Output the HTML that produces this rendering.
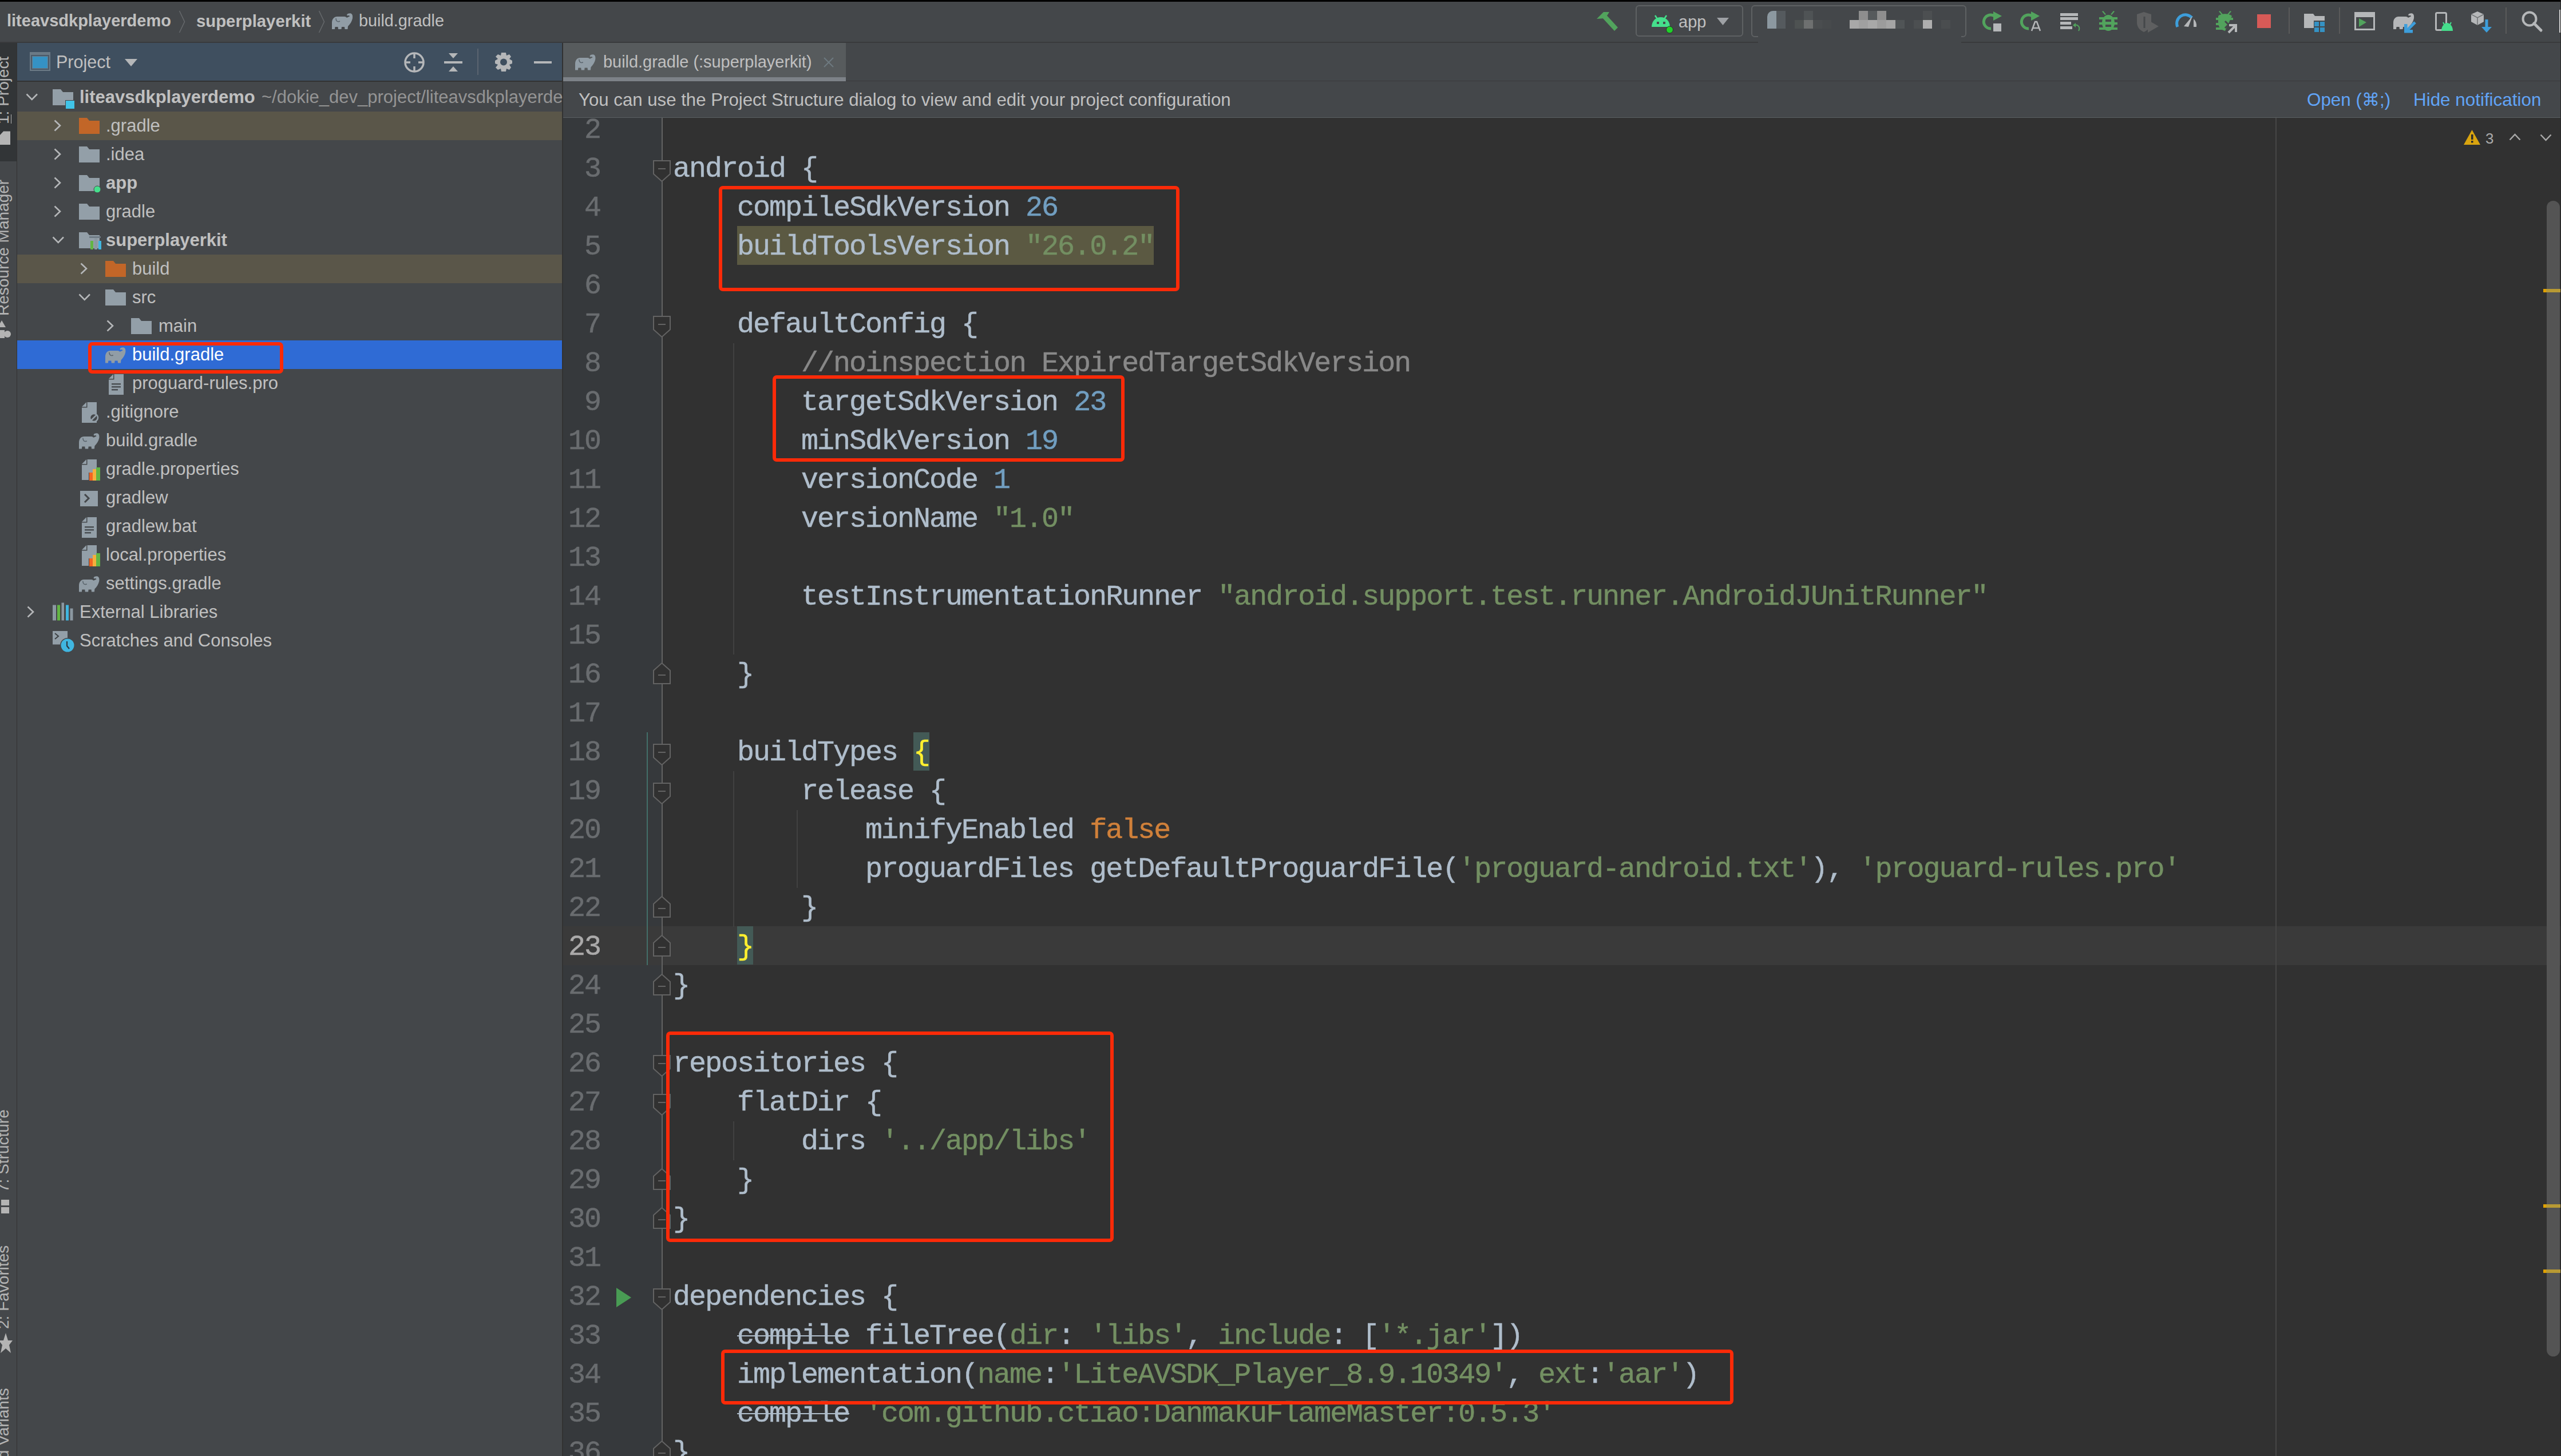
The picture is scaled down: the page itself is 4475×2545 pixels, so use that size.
<!DOCTYPE html>
<html><head><meta charset="utf-8"><title>build.gradle</title>
<style>
html,body{margin:0;padding:0;}
body{width:4475px;height:2545px;overflow:hidden;position:relative;background:#44474A;font-family:"Liberation Sans",sans-serif;}
div{position:absolute;box-sizing:border-box;}
.t{white-space:pre;line-height:1;}
.c{position:absolute;font-family:"Liberation Mono",monospace;white-space:pre;line-height:1;font-size:50px;letter-spacing:-2px;color:#AFBDCB;-webkit-text-stroke:0.5px currentColor;}
svg{position:absolute;overflow:visible;}
</style></head><body>

<div style="left:0px;top:0px;width:4475px;height:3px;background:#000000;"></div>
<div style="left:0px;top:3px;width:4475px;height:70px;background:#44474A;"></div>
<div style="left:0px;top:72.6px;width:4475px;height:2px;background:#393A3C;"></div>
<div class="t" style="left:12px;top:22.21px;font-size:29px;color:#C0C0C0;font-weight:bold;">liteavsdkplayerdemo</div>
<svg style="left:312px;top:18px;" width="12" height="40" viewBox="0 0 12 40"><path d="M1.5 1 L10.5 20 L1.5 39" fill="none" stroke="#65686B" stroke-width="1.6"/></svg>
<div class="t" style="left:343px;top:21.95px;font-size:29.3px;color:#C0C0C0;font-weight:bold;">superplayerkit</div>
<svg style="left:556px;top:18px;" width="12" height="40" viewBox="0 0 12 40"><path d="M1.5 1 L10.5 20 L1.5 39" fill="none" stroke="#65686B" stroke-width="1.6"/></svg>
<svg style="left:580px;top:23px;" width="37.0" height="28.0" viewBox="0 0 37.0 28.0"><g transform="scale(1.0)"><path d="M0 28 L0 17 C0 10 4 6 9 6 L22 6 C24 6 25 7 26 8 C28 7 30 6 31 5.5 C31 4 29 3.5 27 4.5 L26 3 C27 0.5 31 0 33 0.5 C36 1.5 36.5 5 36 9 C35 14 32 19 28 23 L27.5 28 L22.5 28 L22 24 L17 24 L16.5 28 L11 28 L10.5 24 L5.5 24 L5 28 Z" fill="#919DA6"/><path d="M7 9 C7 14 10 16 14 14" fill="none" stroke="#5A646C" stroke-width="1.6"/></g></svg>
<div class="t" style="left:627px;top:22.38px;font-size:28.8px;color:#C0C0C0;font-weight:normal;">build.gradle</div>
<svg style="left:2790px;top:19px;" width="38" height="36" viewBox="0 0 38 36"><g fill="#52A35D"><path d="M0 14 L12 2 L22 2 L19 7 L13 13 Z"/><path d="M8 10 L14 4 L37 29 L31 35 Z"/></g></svg>
<div style="left:2858px;top:9px;width:188px;height:55px;background:transparent;border:2px solid #5E6163;border-radius:6px;"></div>
<svg style="left:2886px;top:26px;" width="34" height="30" viewBox="0 0 34 30"><g fill="#45DF8C"><path d="M0 21 C0 11 7 4 16 4 C25 4 32 11 32 21 Z"/><path d="M6 1 L10 7" stroke="#45DF8C" stroke-width="2.5"/><path d="M26 1 L22 7" stroke="#45DF8C" stroke-width="2.5"/></g><rect x="9" y="12" width="4" height="4" fill="#45484A"/><rect x="20" y="12" width="4" height="4" fill="#45484A"/><circle cx="31.5" cy="26" r="6" fill="#1FD12A" stroke="#2B2B2B" stroke-width="1"/></svg>
<div class="t" style="left:2933px;top:23.71px;font-size:29px;color:#C0C0C0;font-weight:normal;">app</div>
<svg style="left:3000px;top:31px;" width="22" height="14" viewBox="0 0 22 14"><path d="M0 0 L21 0 L10.5 13 Z" fill="#9EA1A5"/></svg>
<div style="left:3060px;top:9px;width:376px;height:56px;background:transparent;border:2px solid #5E6163;border-radius:6px;"></div>
<div style="left:3072px;top:50px;width:355px;height:25px;background:#44474A;"></div>
<div style="left:3088px;top:19px;width:16px;height:16px;background:#8C98A0;border-top-left-radius:10px;"></div>
<div style="left:3088px;top:35px;width:16px;height:15px;background:#8C98A0;"></div>
<div style="left:3104px;top:19px;width:16px;height:16px;background:#555A5E;"></div>
<div style="left:3104px;top:35px;width:16px;height:15px;background:#555A5E;"></div>
<div style="left:3136px;top:35px;width:16px;height:15px;background:#4E5252;"></div>
<div style="left:3152px;top:19px;width:16px;height:16px;background:#4F5355;"></div>
<div style="left:3152px;top:35px;width:16px;height:15px;background:#6E7070;"></div>
<div style="left:3168px;top:35px;width:16px;height:15px;background:#4A4D4F;"></div>
<div style="left:3184px;top:35px;width:16px;height:15px;background:#474A4C;"></div>
<div style="left:3232px;top:35px;width:16px;height:15px;background:#A8A8A8;"></div>
<div style="left:3248px;top:19px;width:16px;height:16px;background:#8E8E8E;"></div>
<div style="left:3248px;top:35px;width:16px;height:15px;background:#A0A0A0;"></div>
<div style="left:3264px;top:19px;width:16px;height:16px;background:#565A5C;"></div>
<div style="left:3264px;top:35px;width:16px;height:15px;background:#A8A8A8;"></div>
<div style="left:3280px;top:19px;width:16px;height:16px;background:#8E8E8E;"></div>
<div style="left:3280px;top:35px;width:16px;height:15px;background:#9C9C9C;"></div>
<div style="left:3296px;top:35px;width:16px;height:15px;background:#A5A5A5;"></div>
<div style="left:3312px;top:35px;width:16px;height:15px;background:#505456;"></div>
<div style="left:3344px;top:35px;width:16px;height:15px;background:#4C4F51;"></div>
<div style="left:3360px;top:19px;width:16px;height:16px;background:#4C4F51;"></div>
<div style="left:3360px;top:35px;width:16px;height:15px;background:#AEAEAE;"></div>
<div style="left:3392px;top:35px;width:16px;height:15px;background:#4A4D4F;"></div>
<svg style="left:3465px;top:19px;" width="34" height="36" viewBox="0 0 34 36"><path d="M14 31 A12 12 0 1 1 20 9" fill="none" stroke="#52A35D" stroke-width="5"/><path d="M18 1 L33 9 L18 17 Z" fill="#52A35D"/><rect x="18" y="22" width="14" height="14" fill="#B5B7B9"/></svg>
<svg style="left:3531px;top:19px;" width="34" height="36" viewBox="0 0 34 36"><path d="M14 31 A12 12 0 1 1 20 9" fill="none" stroke="#52A35D" stroke-width="5"/><path d="M18 1 L33 9 L18 17 Z" fill="#52A35D"/><path d="M19 35 L25 19 L28 19 L34 35 M21 30 L32 30" fill="none" stroke="#B5B7B9" stroke-width="2.5"/></svg>
<svg style="left:3600px;top:23px;" width="36" height="32" viewBox="0 0 36 32"><g fill="#B5B7B9"><rect x="0" y="0" width="31" height="5"/><rect x="0" y="7" width="31" height="5"/><rect x="0" y="15" width="19" height="5"/><rect x="0" y="23" width="21" height="5"/></g><path d="M24 21 C30 19 36 24 32 31" fill="none" stroke="#52A35D" stroke-width="2"/><path d="M22 21 L27 17 L27 25 Z" fill="#52A35D"/></svg>
<svg style="left:3668px;top:19px;" width="32" height="36" viewBox="0 0 32 36"><g fill="#52A35D"><ellipse cx="16" cy="21" rx="11" ry="14"/><rect x="0" y="11" width="32" height="4"/><rect x="0" y="20" width="32" height="4"/><rect x="0" y="29" width="32" height="4"/><path d="M7 0 L12 6 L10 7 L5 1 Z M25 0 L20 6 L22 7 L27 1 Z"/></g><rect x="11" y="15" width="10" height="4" fill="#45484A"/><rect x="11" y="24" width="10" height="4" fill="#45484A"/></svg>
<svg style="left:3734px;top:21px;" width="38" height="36" viewBox="0 0 38 36"><path d="M0 4 L12 0 L25 4 L25 20 C23 30 14 34 12 35 C6 32 1 28 0 20 Z" fill="#5E5F60"/><path d="M13 8 L13 28" stroke="#45484A" stroke-width="3"/><path d="M19 14 L38 25 L19 36 Z" fill="#5E5F60"/></svg>
<svg style="left:3802px;top:24px;" width="37" height="24" viewBox="0 0 37 24"><path d="M3 23 A15 15 0 0 1 28 7" fill="none" stroke="#3D9EDB" stroke-width="5"/><path d="M14 22 L29 4 L22 23 Z" fill="#B5B7B9"/><path d="M31 9 A16 16 0 0 1 36 23 L31 23 Z" fill="#B5B7B9"/></svg>
<svg style="left:3872px;top:19px;" width="37" height="38" viewBox="0 0 37 38"><g fill="#52A35D"><path d="M4 9 C10 4 22 4 28 9 L16 35 C8 33 4 28 4 20 Z"/><rect x="0" y="12" width="30" height="4"/><rect x="0" y="21" width="14" height="4"/><rect x="0" y="29" width="14" height="4"/><path d="M7 0 L12 6 L10 7 L5 1 Z M25 0 L20 6 L22 7 L27 1 Z"/></g><path d="M16 18 L22 24 L16 30" fill="none" stroke="#45484A" stroke-width="3"/><path d="M22 38 L34 26 M23 25 L35 25 L35 37" fill="none" stroke="#B5B7B9" stroke-width="4"/></svg>
<div style="left:3944px;top:25px;width:24px;height:24px;background:#D75A57;"></div>
<div style="left:3999px;top:13px;width:2px;height:46px;background:#5A5A5A;"></div>
<svg style="left:4026px;top:24px;" width="37" height="31" viewBox="0 0 37 31"><path d="M0 0 L16 0 L19 4 L36 4 L36 12 L17 12 L17 25 L0 25 Z" fill="#B5B7B9"/><g fill="#3592C4"><rect x="18" y="14" width="8" height="8"/><rect x="28" y="14" width="8" height="8"/><rect x="18" y="24" width="8" height="8"/><rect x="28" y="24" width="8" height="8"/></g></svg>
<div style="left:4087px;top:13px;width:2px;height:46px;background:#5A5A5A;"></div>
<svg style="left:4114px;top:21px;" width="37" height="33" viewBox="0 0 37 33"><rect x="1.5" y="1.5" width="33" height="29" fill="none" stroke="#B5B7B9" stroke-width="3"/><rect x="1" y="1" width="34" height="8" fill="#B5B7B9"/><path d="M8 11 L21 18 L8 26 Z" fill="#52A35D"/></svg>
<svg style="left:4182px;top:23px;" width="37.0" height="28.0" viewBox="0 0 37.0 28.0"><g transform="scale(1.0)"><path d="M0 28 L0 17 C0 10 4 6 9 6 L22 6 C24 6 25 7 26 8 C28 7 30 6 31 5.5 C31 4 29 3.5 27 4.5 L26 3 C27 0.5 31 0 33 0.5 C36 1.5 36.5 5 36 9 C35 14 32 19 28 23 L27.5 28 L22.5 28 L22 24 L17 24 L16.5 28 L11 28 L10.5 24 L5.5 24 L5 28 Z" fill="#B5B7B9"/></g></svg>
<svg style="left:4200px;top:38px;" width="22" height="20" viewBox="0 0 22 20"><path d="M4 17 L20 1" stroke="#3D9EDB" stroke-width="5"/><path d="M1 4 L1 19.5 L16 19.5 L16 14 L6.5 14 L6.5 4 Z" fill="#3D9EDB"/></svg>
<svg style="left:4255px;top:21px;" width="32" height="34" viewBox="0 0 32 34"><rect x="1.5" y="1.5" width="18" height="30" rx="2" fill="none" stroke="#B5B7B9" stroke-width="3"/><path d="M11 33 C11 24 17 19 21 19 C25 19 31 24 31 33 Z" fill="#45DF8C"/><path d="M14 18 L16 22 M28 18 L26 22" stroke="#45DF8C" stroke-width="2"/></svg>
<svg style="left:4318px;top:20px;" width="38" height="38" viewBox="0 0 38 38"><path d="M11 0 L22 5 L22 18 L11 24 L0 18 L0 5 Z" fill="#B5B7B9"/><path d="M0 5 L11 11 L22 5 M11 11 L11 24" fill="none" stroke="#6E7173" stroke-width="1.5"/><path d="M27 14 L27 30" stroke="#3D9EDB" stroke-width="5"/><path d="M18 27 L36 27 L27 37 Z" fill="#3D9EDB"/></svg>
<div style="left:4378px;top:13px;width:2px;height:46px;background:#5A5A5A;"></div>
<svg style="left:4406px;top:19px;" width="36" height="36" viewBox="0 0 36 36"><circle cx="14" cy="14" r="11.5" fill="none" stroke="#B5B7B9" stroke-width="4"/><path d="M22 22 L34 34" stroke="#B5B7B9" stroke-width="5" stroke-linecap="round"/></svg>
<div style="left:4471.5px;top:17px;width:2.5px;height:40px;background:#D0D0D0;"></div>
<div style="left:0px;top:75px;width:29px;height:2470px;background:#44474A;"></div>
<div style="left:29px;top:75px;width:1px;height:2470px;background:#323232;"></div>
<div style="left:0px;top:75px;width:29px;height:207px;background:#323537;"></div>
<div class="t" style="left:-7.9px;top:217px;font-size:28px;color:#B4B4B4;font-weight:normal;transform-origin:0 0;transform:rotate(-90deg) translateY(0px);">1: Project</div>
<svg style="left:0px;top:229px;" width="19" height="25" viewBox="0 0 19 25"><path d="M0 7 L6 0.5 L18 0.5 L18 24 L0 24 Z" fill="#B4B4B4"/></svg>
<div style="left:18.5px;top:200px;width:1.6px;height:16px;background:#B4B4B4;"></div>
<div class="t" style="left:-7.9px;top:552px;font-size:28px;color:#B4B4B4;font-weight:normal;transform-origin:0 0;transform:rotate(-90deg) translateY(0px);">Resource Manager</div>
<svg style="left:0px;top:560px;" width="20" height="34" viewBox="0 0 20 34"><path d="M3 0 L10 12 L-4 12 Z" fill="#B4B4B4"/><rect x="-4" y="17" width="12" height="14" fill="#B4B4B4"/><circle cx="13" cy="24" r="6" fill="#B4B4B4"/></svg>
<div class="t" style="left:-7.9px;top:2084px;font-size:28px;color:#B4B4B4;font-weight:normal;transform-origin:0 0;transform:rotate(-90deg) translateY(0px);">7: Structure</div>
<svg style="left:0px;top:2097px;" width="20" height="25" viewBox="0 0 20 25"><g fill="#B4B4B4"><rect x="2" y="0" width="14" height="10"/><rect x="2" y="13" width="14" height="11"/></g></svg>
<div class="t" style="left:-7.9px;top:2323px;font-size:28px;color:#B4B4B4;font-weight:normal;transform-origin:0 0;transform:rotate(-90deg) translateY(0px);">2: Favorites</div>
<svg style="left:0px;top:2330px;" width="22" height="37" viewBox="0 0 22 37"><path d="M10 0 L14 13 L22 13 L16 21 L19 35 L10 27 L1 35 L4 21 L-2 13 L6 13 Z" fill="#B4B4B4"/></svg>
<div class="t" style="left:-7.9px;top:2597px;font-size:28px;color:#B4B4B4;font-weight:normal;transform-origin:0 0;transform:rotate(-90deg) translateY(0px);">Build Variants</div>
<div style="left:30px;top:75px;width:952px;height:66px;background:#3F4F5F;"></div>
<div style="left:30px;top:141px;width:952px;height:2px;background:#323232;"></div>
<div style="left:30px;top:143px;width:952px;height:2402px;background:#44474A;"></div>
<div style="left:982px;top:75px;width:2px;height:2470px;background:#323232;"></div>
<svg style="left:52px;top:91px;" width="37" height="34" viewBox="0 0 37 34"><rect x="0" y="0" width="36" height="33" fill="#6B7A86"/><rect x="5" y="8" width="26" height="20" fill="#3592C4"/><rect x="3" y="6" width="30" height="24" fill="none" stroke="#4A5A68" stroke-width="2"/></svg>
<div class="t" style="left:98px;top:92.72px;font-size:30.5px;color:#C0C0C0;font-weight:normal;">Project</div>
<svg style="left:218px;top:103px;" width="23" height="14" viewBox="0 0 23 14"><path d="M0 0 L22 0 L11 13 Z" fill="#B5B7B9"/></svg>
<svg style="left:706px;top:91px;" width="36" height="36" viewBox="0 0 36 36"><circle cx="18" cy="18" r="16" fill="none" stroke="#B5B7B9" stroke-width="3.5"/><path d="M18 1 V11 M18 25 V35 M1 18 H11 M25 18 H35" stroke="#B5B7B9" stroke-width="3.5"/></svg>
<svg style="left:776px;top:93px;" width="32" height="32" viewBox="0 0 32 32"><g fill="#B5B7B9"><path d="M8 0 L24 0 L16 9 Z"/><rect x="0" y="14" width="32" height="4"/><path d="M8 32 L24 32 L16 23 Z"/></g></svg>
<div style="left:834px;top:85px;width:2px;height:46px;background:#5A6470;"></div>
<svg style="left:864px;top:92px;" width="32" height="33" viewBox="0 0 32 33"><path d="M16 0 L20 0 L21 5 L26 3 L29 7 L26 11 L31 14 L31 19 L26 21 L29 26 L26 30 L21 28 L20 33 L12 33 L11 28 L6 30 L2 26 L6 21 L1 19 L1 14 L6 11 L2 7 L6 3 L11 5 L12 0 Z" fill="#B5B7B9"/><circle cx="16" cy="16.5" r="6" fill="#3F4F5F"/></svg>
<div style="left:933px;top:107px;width:31px;height:4px;background:#B5B7B9;"></div>
<svg style="left:44.7px;top:163px;" width="22" height="13" viewBox="0 0 22 13"><path d="M1.5 1.5 L10.75 11 L20 1.5" fill="none" stroke="#B5B7B9" stroke-width="2.6"/></svg>
<svg style="left:92.0px;top:156px;" width="36" height="28" viewBox="0 0 36 28"><path d="M0 0 L14 0 L18 5 L36 5 L36 28 L0 28 Z" fill="#939FA8"/></svg>
<div style="left:114.0px;top:175px;width:17px;height:16px;background:#40C4E8;border:1px solid #44474A;"></div>
<div class="t" style="left:139px;top:154.00px;font-size:31px;color:#C0C0C0;font-weight:bold;">liteavsdkplayerdemo</div>
<div class="t" style="left:457px;top:154.00px;font-size:31px;color:#949494;font-weight:normal;">~/dokie_dev_project/liteavsdkplayerdemo</div>
<div style="left:30px;top:195px;width:952px;height:50px;background:#5A5649;"></div>
<svg style="left:94.3px;top:209px;" width="13" height="21" viewBox="0 0 13 21"><path d="M1.5 1.5 L11 10.5 L1.5 19.5" fill="none" stroke="#B5B7B9" stroke-width="2.6"/></svg>
<svg style="left:137.8px;top:206px;" width="36" height="28" viewBox="0 0 36 28"><path d="M0 0 L14 0 L18 5 L36 5 L36 28 L0 28 Z" fill="#C26628"/></svg>
<div class="t" style="left:185px;top:204.00px;font-size:31px;color:#C0C0C0;font-weight:normal;">.gradle</div>
<svg style="left:94.3px;top:259px;" width="13" height="21" viewBox="0 0 13 21"><path d="M1.5 1.5 L11 10.5 L1.5 19.5" fill="none" stroke="#B5B7B9" stroke-width="2.6"/></svg>
<svg style="left:137.8px;top:256px;" width="36" height="28" viewBox="0 0 36 28"><path d="M0 0 L14 0 L18 5 L36 5 L36 28 L0 28 Z" fill="#939FA8"/></svg>
<div class="t" style="left:185px;top:254.00px;font-size:31px;color:#C0C0C0;font-weight:normal;">.idea</div>
<svg style="left:94.3px;top:309px;" width="13" height="21" viewBox="0 0 13 21"><path d="M1.5 1.5 L11 10.5 L1.5 19.5" fill="none" stroke="#B5B7B9" stroke-width="2.6"/></svg>
<svg style="left:137.8px;top:306px;" width="36" height="28" viewBox="0 0 36 28"><path d="M0 0 L14 0 L18 5 L36 5 L36 28 L0 28 Z" fill="#939FA8"/></svg>
<svg style="left:163.8px;top:325px;" width="12" height="12" viewBox="0 0 12 12"><circle cx="6" cy="6" r="6" fill="#45DF8C" stroke="#44474A" stroke-width="1"/></svg>
<div class="t" style="left:185px;top:304.00px;font-size:31px;color:#C0C0C0;font-weight:bold;">app</div>
<svg style="left:94.3px;top:359px;" width="13" height="21" viewBox="0 0 13 21"><path d="M1.5 1.5 L11 10.5 L1.5 19.5" fill="none" stroke="#B5B7B9" stroke-width="2.6"/></svg>
<svg style="left:137.8px;top:356px;" width="36" height="28" viewBox="0 0 36 28"><path d="M0 0 L14 0 L18 5 L36 5 L36 28 L0 28 Z" fill="#939FA8"/></svg>
<div class="t" style="left:185px;top:354.00px;font-size:31px;color:#C0C0C0;font-weight:normal;">gradle</div>
<svg style="left:90.7px;top:413px;" width="22" height="13" viewBox="0 0 22 13"><path d="M1.5 1.5 L10.75 11 L20 1.5" fill="none" stroke="#B5B7B9" stroke-width="2.6"/></svg>
<svg style="left:137.8px;top:406px;" width="36" height="28" viewBox="0 0 36 28"><path d="M0 0 L14 0 L18 5 L36 5 L36 28 L0 28 Z" fill="#939FA8"/></svg>
<svg style="left:155.8px;top:413px;" width="22" height="24" viewBox="0 0 22 24"><rect x="0" y="0" width="20" height="3" fill="#6E7A84"/><rect x="2" y="8" width="5" height="15" fill="#62B543"/><rect x="9" y="3" width="5" height="20" fill="#8B98A1"/><rect x="16" y="8" width="5" height="15" fill="#40B6E0"/></svg>
<div class="t" style="left:185px;top:404.00px;font-size:31px;color:#C0C0C0;font-weight:bold;">superplayerkit</div>
<div style="left:30px;top:445px;width:952px;height:50px;background:#5A5649;"></div>
<svg style="left:140.1px;top:459px;" width="13" height="21" viewBox="0 0 13 21"><path d="M1.5 1.5 L11 10.5 L1.5 19.5" fill="none" stroke="#B5B7B9" stroke-width="2.6"/></svg>
<svg style="left:183.6px;top:456px;" width="36" height="28" viewBox="0 0 36 28"><path d="M0 0 L14 0 L18 5 L36 5 L36 28 L0 28 Z" fill="#C26628"/></svg>
<div class="t" style="left:231px;top:454.00px;font-size:31px;color:#C0C0C0;font-weight:normal;">build</div>
<svg style="left:136.7px;top:513px;" width="22" height="13" viewBox="0 0 22 13"><path d="M1.5 1.5 L10.75 11 L20 1.5" fill="none" stroke="#B5B7B9" stroke-width="2.6"/></svg>
<svg style="left:183.6px;top:506px;" width="36" height="28" viewBox="0 0 36 28"><path d="M0 0 L14 0 L18 5 L36 5 L36 28 L0 28 Z" fill="#939FA8"/></svg>
<div class="t" style="left:231px;top:504.00px;font-size:31px;color:#C0C0C0;font-weight:normal;">src</div>
<svg style="left:185.89999999999998px;top:559px;" width="13" height="21" viewBox="0 0 13 21"><path d="M1.5 1.5 L11 10.5 L1.5 19.5" fill="none" stroke="#B5B7B9" stroke-width="2.6"/></svg>
<svg style="left:229.39999999999998px;top:556px;" width="36" height="28" viewBox="0 0 36 28"><path d="M0 0 L14 0 L18 5 L36 5 L36 28 L0 28 Z" fill="#939FA8"/></svg>
<div class="t" style="left:277px;top:554.00px;font-size:31px;color:#C0C0C0;font-weight:normal;">main</div>
<div style="left:30px;top:595px;width:952px;height:50px;background:#2F6BD5;"></div>
<svg style="left:183.6px;top:607px;" width="36.26" height="27.439999999999998" viewBox="0 0 36.26 27.439999999999998"><g transform="scale(0.98)"><path d="M0 28 L0 17 C0 10 4 6 9 6 L22 6 C24 6 25 7 26 8 C28 7 30 6 31 5.5 C31 4 29 3.5 27 4.5 L26 3 C27 0.5 31 0 33 0.5 C36 1.5 36.5 5 36 9 C35 14 32 19 28 23 L27.5 28 L22.5 28 L22 24 L17 24 L16.5 28 L11 28 L10.5 24 L5.5 24 L5 28 Z" fill="#919DA6"/><path d="M7 9 C7 14 10 16 14 14" fill="none" stroke="#5A646C" stroke-width="1.6"/></g></svg>
<div class="t" style="left:231px;top:604.00px;font-size:31px;color:#FFFFFF;font-weight:normal;">build.gradle</div>
<svg style="left:189.6px;top:654px;" width="27" height="37" viewBox="0 0 27 37"><path d="M9.5 0 L26 0 L26 36 L0 36 L0 9.5 L9.5 9.5 Z" fill="#939FA8"/><path d="M0 8 L8 0 L8 8 Z" fill="#939FA8"/><g fill="#4A4F53"><rect x="5" y="16" width="16" height="2.5"/><rect x="5" y="21" width="16" height="2.5"/><rect x="5" y="26" width="11" height="2.5"/></g></svg>
<div class="t" style="left:231px;top:654.00px;font-size:31px;color:#C0C0C0;font-weight:normal;">proguard-rules.pro</div>
<svg style="left:142.8px;top:703px;" width="27" height="37" viewBox="0 0 27 37"><path d="M9.5 0 L26 0 L26 36 L0 36 L0 9.5 L9.5 9.5 Z" fill="#939FA8"/><path d="M0 8 L8 0 L8 8 Z" fill="#939FA8"/></svg>
<svg style="left:155.8px;top:722px;" width="16" height="16" viewBox="0 0 16 16"><circle cx="8" cy="8" r="7" fill="#44474A" stroke="#939FA8" stroke-width="2.5"/><path d="M3.5 12.5 L12.5 3.5" stroke="#939FA8" stroke-width="2.5"/></svg>
<div class="t" style="left:185px;top:704.00px;font-size:31px;color:#C0C0C0;font-weight:normal;">.gitignore</div>
<svg style="left:137.8px;top:757px;" width="36.26" height="27.439999999999998" viewBox="0 0 36.26 27.439999999999998"><g transform="scale(0.98)"><path d="M0 28 L0 17 C0 10 4 6 9 6 L22 6 C24 6 25 7 26 8 C28 7 30 6 31 5.5 C31 4 29 3.5 27 4.5 L26 3 C27 0.5 31 0 33 0.5 C36 1.5 36.5 5 36 9 C35 14 32 19 28 23 L27.5 28 L22.5 28 L22 24 L17 24 L16.5 28 L11 28 L10.5 24 L5.5 24 L5 28 Z" fill="#919DA6"/><path d="M7 9 C7 14 10 16 14 14" fill="none" stroke="#5A646C" stroke-width="1.6"/></g></svg>
<div class="t" style="left:185px;top:754.00px;font-size:31px;color:#C0C0C0;font-weight:normal;">build.gradle</div>
<svg style="left:142.8px;top:803px;" width="27" height="37" viewBox="0 0 27 37"><path d="M9.5 0 L26 0 L26 36 L0 36 L0 9.5 L9.5 9.5 Z" fill="#939FA8"/><path d="M0 8 L8 0 L8 8 Z" fill="#939FA8"/></svg>
<svg style="left:154.8px;top:816px;" width="22" height="26" viewBox="0 0 22 26"><rect x="0" y="10" width="22" height="16" fill="#44474A"/><rect x="1" y="10" width="6" height="14" fill="#F26522"/><rect x="7" y="4" width="6" height="20" fill="#F4AF3D"/><rect x="13" y="1" width="7" height="23" fill="#62B543"/></svg>
<div class="t" style="left:185px;top:804.00px;font-size:31px;color:#C0C0C0;font-weight:normal;">gradle.properties</div>
<svg style="left:139.8px;top:858px;" width="32" height="28" viewBox="0 0 32 28"><rect x="0" y="0" width="31" height="27" fill="#939FA8"/><path d="M8 6 L15 13 L8 20" fill="none" stroke="#44474A" stroke-width="3"/></svg>
<div class="t" style="left:185px;top:854.00px;font-size:31px;color:#C0C0C0;font-weight:normal;">gradlew</div>
<svg style="left:142.8px;top:904px;" width="27" height="37" viewBox="0 0 27 37"><path d="M9.5 0 L26 0 L26 36 L0 36 L0 9.5 L9.5 9.5 Z" fill="#939FA8"/><path d="M0 8 L8 0 L8 8 Z" fill="#939FA8"/><g fill="#4A4F53"><rect x="5" y="16" width="16" height="2.5"/><rect x="5" y="21" width="16" height="2.5"/><rect x="5" y="26" width="11" height="2.5"/></g></svg>
<div class="t" style="left:185px;top:904.00px;font-size:31px;color:#C0C0C0;font-weight:normal;">gradlew.bat</div>
<svg style="left:142.8px;top:953px;" width="27" height="37" viewBox="0 0 27 37"><path d="M9.5 0 L26 0 L26 36 L0 36 L0 9.5 L9.5 9.5 Z" fill="#939FA8"/><path d="M0 8 L8 0 L8 8 Z" fill="#939FA8"/></svg>
<svg style="left:154.8px;top:966px;" width="22" height="26" viewBox="0 0 22 26"><rect x="0" y="10" width="22" height="16" fill="#44474A"/><rect x="1" y="10" width="6" height="14" fill="#F26522"/><rect x="7" y="4" width="6" height="20" fill="#F4AF3D"/><rect x="13" y="1" width="7" height="23" fill="#62B543"/></svg>
<div class="t" style="left:185px;top:954.00px;font-size:31px;color:#C0C0C0;font-weight:normal;">local.properties</div>
<svg style="left:137.8px;top:1007px;" width="36.26" height="27.439999999999998" viewBox="0 0 36.26 27.439999999999998"><g transform="scale(0.98)"><path d="M0 28 L0 17 C0 10 4 6 9 6 L22 6 C24 6 25 7 26 8 C28 7 30 6 31 5.5 C31 4 29 3.5 27 4.5 L26 3 C27 0.5 31 0 33 0.5 C36 1.5 36.5 5 36 9 C35 14 32 19 28 23 L27.5 28 L22.5 28 L22 24 L17 24 L16.5 28 L11 28 L10.5 24 L5.5 24 L5 28 Z" fill="#919DA6"/><path d="M7 9 C7 14 10 16 14 14" fill="none" stroke="#5A646C" stroke-width="1.6"/></g></svg>
<div class="t" style="left:185px;top:1004.00px;font-size:31px;color:#C0C0C0;font-weight:normal;">settings.gradle</div>
<svg style="left:47.0px;top:1059px;" width="13" height="21" viewBox="0 0 13 21"><path d="M1.5 1.5 L11 10.5 L1.5 19.5" fill="none" stroke="#B5B7B9" stroke-width="2.6"/></svg>
<svg style="left:92.0px;top:1053px;" width="37" height="32" viewBox="0 0 37 32"><rect x="0" y="4.5" width="6" height="27" fill="#8B98A1"/><rect x="8" y="4.5" width="5" height="27" fill="#62B543"/><rect x="15.5" y="0.5" width="4.5" height="31" fill="#8B98A1"/><rect x="23" y="4.5" width="5" height="27" fill="#40B6E0"/><rect x="30.5" y="10.5" width="5" height="21" fill="#8B98A1"/></svg>
<div class="t" style="left:139px;top:1053.99px;font-size:31px;color:#C0C0C0;font-weight:normal;">External Libraries</div>
<svg style="left:92.0px;top:1103px;" width="39" height="40" viewBox="0 0 39 40"><rect x="0" y="0" width="26" height="23.5" fill="#939FA8"/><path d="M4 4 L10 9 L4 14" fill="none" stroke="#3C4043" stroke-width="2"/><circle cx="26" cy="25" r="13" fill="#44474A"/><circle cx="26" cy="25" r="11.5" fill="#40B6E0"/><path d="M25 18 L25 26 L29 31" fill="none" stroke="#2B3A44" stroke-width="2.2"/></svg>
<div class="t" style="left:139px;top:1103.99px;font-size:31px;color:#C0C0C0;font-weight:normal;">Scratches and Consoles</div>
<div style="left:984px;top:75px;width:3491px;height:67px;background:#44474A;"></div>
<div style="left:984px;top:141px;width:3491px;height:2px;background:#393A3C;"></div>
<div style="left:984px;top:75px;width:494px;height:60px;background:#575B5D;"></div>
<div style="left:984px;top:135px;width:494px;height:7px;background:#7D8288;"></div>
<svg style="left:1005px;top:95px;" width="36.26" height="27.439999999999998" viewBox="0 0 36.26 27.439999999999998"><g transform="scale(0.98)"><path d="M0 28 L0 17 C0 10 4 6 9 6 L22 6 C24 6 25 7 26 8 C28 7 30 6 31 5.5 C31 4 29 3.5 27 4.5 L26 3 C27 0.5 31 0 33 0.5 C36 1.5 36.5 5 36 9 C35 14 32 19 28 23 L27.5 28 L22.5 28 L22 24 L17 24 L16.5 28 L11 28 L10.5 24 L5.5 24 L5 28 Z" fill="#919DA6"/><path d="M7 9 C7 14 10 16 14 14" fill="none" stroke="#5A646C" stroke-width="1.6"/></g></svg>
<div class="t" style="left:1054px;top:93.89px;font-size:28.9px;color:#C0C0C0;font-weight:normal;">build.gradle (:superplayerkit)</div>
<svg style="left:1439px;top:100px;" width="18" height="18" viewBox="0 0 18 18"><path d="M1 1 L17 17 M17 1 L1 17" stroke="#6E7A80" stroke-width="2"/></svg>
<div style="left:984px;top:142px;width:3491px;height:63px;background:#44474A;"></div>
<div style="left:984px;top:204.5px;width:3491px;height:2px;background:#5A5F61;"></div>
<div class="t" style="left:1011px;top:159.32px;font-size:31.2px;color:#C0C0C0;font-weight:normal;">You can use the Project Structure dialog to view and edit your project configuration</div>
<div class="t" style="left:4031px;top:158.65px;font-size:31.4px;color:#61A4F7;font-weight:normal;">Open (⌘;)</div>
<div class="t" style="left:4217px;top:158.65px;font-size:31.4px;color:#61A4F7;font-weight:normal;">Hide notification</div>
<div style="left:984px;top:206px;width:172px;height:2339px;background:#36393C;"></div>
<div style="left:1156px;top:206px;width:3319px;height:2339px;background:#313131;"></div>
<div style="left:984px;top:1618.7px;width:3491px;height:68px;background:#3A3A3A;"></div>
<div style="left:3976px;top:206px;width:2px;height:2339px;background:#464646;"></div>
<div style="left:1156px;top:206px;width:2px;height:2339px;background:#636363;"></div>
<div style="left:1281px;top:599.7px;width:1.5px;height:544.0px;background:#414141;"></div>
<div style="left:1281px;top:1347.7px;width:1.5px;height:272.0px;background:#414141;"></div>
<div style="left:1392px;top:1415.7px;width:1.5px;height:136.0px;background:#414141;"></div>
<div style="left:1281px;top:1959.7px;width:1.5px;height:68.0px;background:#414141;"></div>
<div style="left:1130px;top:1279.7px;width:2px;height:407.0px;background:#436F69;"></div>
<div style="left:1288px;top:395.2px;width:727.5999999999999px;height:67.6px;background:#5B5942;"></div>
<div style="left:1596px;top:1279.7px;width:28px;height:67.6px;background:#435A56;"></div>
<div style="left:1288px;top:1618.7px;width:28px;height:67.6px;background:#435A56;"></div>
<div class="c" style="left:1021px;top:203.1px;color:#696C6F;">2</div>
<div class="c" style="left:1021px;top:271.1px;color:#696C6F;">3</div>
<div class="c" style="left:1021px;top:339.1px;color:#696C6F;">4</div>
<div class="c" style="left:1021px;top:407.1px;color:#696C6F;">5</div>
<div class="c" style="left:1021px;top:475.1px;color:#696C6F;">6</div>
<div class="c" style="left:1021px;top:543.1px;color:#696C6F;">7</div>
<div class="c" style="left:1021px;top:611.1px;color:#696C6F;">8</div>
<div class="c" style="left:1021px;top:679.1px;color:#696C6F;">9</div>
<div class="c" style="left:993px;top:747.1px;color:#696C6F;">10</div>
<div class="c" style="left:993px;top:815.1px;color:#696C6F;">11</div>
<div class="c" style="left:993px;top:883.1px;color:#696C6F;">12</div>
<div class="c" style="left:993px;top:951.1px;color:#696C6F;">13</div>
<div class="c" style="left:993px;top:1019.1px;color:#696C6F;">14</div>
<div class="c" style="left:993px;top:1087.1px;color:#696C6F;">15</div>
<div class="c" style="left:993px;top:1155.1px;color:#696C6F;">16</div>
<div class="c" style="left:993px;top:1223.1px;color:#696C6F;">17</div>
<div class="c" style="left:993px;top:1291.1px;color:#696C6F;">18</div>
<div class="c" style="left:993px;top:1359.1px;color:#696C6F;">19</div>
<div class="c" style="left:993px;top:1427.1px;color:#696C6F;">20</div>
<div class="c" style="left:993px;top:1495.1px;color:#696C6F;">21</div>
<div class="c" style="left:993px;top:1563.1px;color:#696C6F;">22</div>
<div class="c" style="left:993px;top:1631.1px;color:#ABAAAA;">23</div>
<div class="c" style="left:993px;top:1699.1px;color:#696C6F;">24</div>
<div class="c" style="left:993px;top:1767.1px;color:#696C6F;">25</div>
<div class="c" style="left:993px;top:1835.1px;color:#696C6F;">26</div>
<div class="c" style="left:993px;top:1903.1px;color:#696C6F;">27</div>
<div class="c" style="left:993px;top:1971.1px;color:#696C6F;">28</div>
<div class="c" style="left:993px;top:2039.1px;color:#696C6F;">29</div>
<div class="c" style="left:993px;top:2107.1px;color:#696C6F;">30</div>
<div class="c" style="left:993px;top:2175.1px;color:#696C6F;">31</div>
<div class="c" style="left:993px;top:2243.1px;color:#696C6F;">32</div>
<div class="c" style="left:993px;top:2311.1px;color:#696C6F;">33</div>
<div class="c" style="left:993px;top:2379.1px;color:#696C6F;">34</div>
<div class="c" style="left:993px;top:2447.1px;color:#696C6F;">35</div>
<div class="c" style="left:993px;top:2515.1px;color:#696C6F;">36</div>
<div class="c" style="left:1176px;top:271.1px;">android {</div>
<div class="c" style="left:1176px;top:339.1px;">    compileSdkVersion <span style="color:#719EC0;">26</span></div>
<div class="c" style="left:1176px;top:407.1px;">    buildToolsVersion <span style="color:#738F62;">&quot;26.0.2&quot;</span></div>
<div class="c" style="left:1176px;top:543.1px;">    defaultConfig {</div>
<div class="c" style="left:1176px;top:611.1px;"><span style="color:#888888;">        //noinspection ExpiredTargetSdkVersion</span></div>
<div class="c" style="left:1176px;top:679.1px;">        targetSdkVersion <span style="color:#719EC0;">23</span></div>
<div class="c" style="left:1176px;top:747.1px;">        minSdkVersion <span style="color:#719EC0;">19</span></div>
<div class="c" style="left:1176px;top:815.1px;">        versionCode <span style="color:#719EC0;">1</span></div>
<div class="c" style="left:1176px;top:883.1px;">        versionName <span style="color:#738F62;">&quot;1.0&quot;</span></div>
<div class="c" style="left:1176px;top:1019.1px;">        testInstrumentationRunner <span style="color:#738F62;">&quot;android.support.test.runner.AndroidJUnitRunner&quot;</span></div>
<div class="c" style="left:1176px;top:1155.1px;">    }</div>
<div class="c" style="left:1176px;top:1291.1px;">    buildTypes <span style="color:#FFF02F;">{</span></div>
<div class="c" style="left:1176px;top:1359.1px;">        release {</div>
<div class="c" style="left:1176px;top:1427.1px;">            minifyEnabled <span style="color:#D0803A;">false</span></div>
<div class="c" style="left:1176px;top:1495.1px;">            proguardFiles getDefaultProguardFile(<span style="color:#738F62;">&#x27;proguard-android.txt&#x27;</span>), <span style="color:#738F62;">&#x27;proguard-rules.pro&#x27;</span></div>
<div class="c" style="left:1176px;top:1563.1px;">        }</div>
<div class="c" style="left:1176px;top:1631.1px;">    <span style="color:#FFF02F;">}</span></div>
<div class="c" style="left:1176px;top:1699.1px;">}</div>
<div class="c" style="left:1176px;top:1835.1px;">repositories {</div>
<div class="c" style="left:1176px;top:1903.1px;">    flatDir {</div>
<div class="c" style="left:1176px;top:1971.1px;">        dirs <span style="color:#738F62;">&#x27;../app/libs&#x27;</span></div>
<div class="c" style="left:1176px;top:2039.1px;">    }</div>
<div class="c" style="left:1176px;top:2107.1px;">}</div>
<div class="c" style="left:1176px;top:2243.1px;">dependencies {</div>
<div class="c" style="left:1176px;top:2311.1px;">    <span style="text-decoration:line-through;text-decoration-thickness:2px;">compile</span> fileTree(<span style="color:#738F62;">dir</span>: <span style="color:#738F62;">&#x27;libs&#x27;</span>, <span style="color:#738F62;">include</span>: [<span style="color:#738F62;">&#x27;*.jar&#x27;</span>])</div>
<div class="c" style="left:1176px;top:2379.1px;">    implementation(<span style="color:#738F62;">name</span>:<span style="color:#738F62;">&#x27;LiteAVSDK_Player_8.9.10349&#x27;</span>, <span style="color:#738F62;">ext</span>:<span style="color:#738F62;">&#x27;aar&#x27;</span>)</div>
<div class="c" style="left:1176px;top:2447.1px;">    <span style="text-decoration:line-through;text-decoration-thickness:2px;">compile</span> <span style="color:#738F62;">&#x27;com.github.ctiao:DanmakuFlameMaster:0.5.3&#x27;</span></div>
<div class="c" style="left:1176px;top:2515.1px;">}</div>
<svg style="left:1141px;top:279.7px;" width="32" height="40" viewBox="0 0 32 40"><path d="M1 1 L30 1 L30 24 L15.5 37 L1 24 Z" fill="#313131" stroke="#636363" stroke-width="2"/><rect x="9" y="14" width="13" height="2" fill="#636363"/></svg>
<svg style="left:1141px;top:551.7px;" width="32" height="40" viewBox="0 0 32 40"><path d="M1 1 L30 1 L30 24 L15.5 37 L1 24 Z" fill="#313131" stroke="#636363" stroke-width="2"/><rect x="9" y="14" width="13" height="2" fill="#636363"/></svg>
<svg style="left:1141px;top:1299.7px;" width="32" height="40" viewBox="0 0 32 40"><path d="M1 1 L30 1 L30 24 L15.5 37 L1 24 Z" fill="#313131" stroke="#636363" stroke-width="2"/><rect x="9" y="14" width="13" height="2" fill="#636363"/></svg>
<svg style="left:1141px;top:1367.7px;" width="32" height="40" viewBox="0 0 32 40"><path d="M1 1 L30 1 L30 24 L15.5 37 L1 24 Z" fill="#313131" stroke="#636363" stroke-width="2"/><rect x="9" y="14" width="13" height="2" fill="#636363"/></svg>
<svg style="left:1141px;top:1843.7px;" width="32" height="40" viewBox="0 0 32 40"><path d="M1 1 L30 1 L30 24 L15.5 37 L1 24 Z" fill="#313131" stroke="#636363" stroke-width="2"/><rect x="9" y="14" width="13" height="2" fill="#636363"/></svg>
<svg style="left:1141px;top:1911.7px;" width="32" height="40" viewBox="0 0 32 40"><path d="M1 1 L30 1 L30 24 L15.5 37 L1 24 Z" fill="#313131" stroke="#636363" stroke-width="2"/><rect x="9" y="14" width="13" height="2" fill="#636363"/></svg>
<svg style="left:1141px;top:2251.7px;" width="32" height="40" viewBox="0 0 32 40"><path d="M1 1 L30 1 L30 24 L15.5 37 L1 24 Z" fill="#313131" stroke="#636363" stroke-width="2"/><rect x="9" y="14" width="13" height="2" fill="#636363"/></svg>
<svg style="left:1141px;top:1157.7px;" width="32" height="40" viewBox="0 0 32 40"><path d="M1 37 L30 37 L30 14 L15.5 1 L1 14 Z" fill="#313131" stroke="#636363" stroke-width="2"/><rect x="9" y="21" width="13" height="2" fill="#636363"/></svg>
<svg style="left:1141px;top:1565.7px;" width="32" height="40" viewBox="0 0 32 40"><path d="M1 37 L30 37 L30 14 L15.5 1 L1 14 Z" fill="#313131" stroke="#636363" stroke-width="2"/><rect x="9" y="21" width="13" height="2" fill="#636363"/></svg>
<svg style="left:1141px;top:1633.7px;" width="32" height="40" viewBox="0 0 32 40"><path d="M1 37 L30 37 L30 14 L15.5 1 L1 14 Z" fill="#313131" stroke="#636363" stroke-width="2"/><rect x="9" y="21" width="13" height="2" fill="#636363"/></svg>
<svg style="left:1141px;top:1701.7px;" width="32" height="40" viewBox="0 0 32 40"><path d="M1 37 L30 37 L30 14 L15.5 1 L1 14 Z" fill="#313131" stroke="#636363" stroke-width="2"/><rect x="9" y="21" width="13" height="2" fill="#636363"/></svg>
<svg style="left:1141px;top:2041.7px;" width="32" height="40" viewBox="0 0 32 40"><path d="M1 37 L30 37 L30 14 L15.5 1 L1 14 Z" fill="#313131" stroke="#636363" stroke-width="2"/><rect x="9" y="21" width="13" height="2" fill="#636363"/></svg>
<svg style="left:1141px;top:2109.7px;" width="32" height="40" viewBox="0 0 32 40"><path d="M1 37 L30 37 L30 14 L15.5 1 L1 14 Z" fill="#313131" stroke="#636363" stroke-width="2"/><rect x="9" y="21" width="13" height="2" fill="#636363"/></svg>
<svg style="left:1141px;top:2517.7px;" width="32" height="40" viewBox="0 0 32 40"><path d="M1 37 L30 37 L30 14 L15.5 1 L1 14 Z" fill="#313131" stroke="#636363" stroke-width="2"/><rect x="9" y="21" width="13" height="2" fill="#636363"/></svg>
<svg style="left:1077px;top:2250.7px;" width="27" height="34" viewBox="0 0 27 34"><path d="M0 0 L26 17 L0 34 Z" fill="#499C54"/></svg>
<svg style="left:4305px;top:227px;" width="30" height="26" viewBox="0 0 30 26"><path d="M14.5 0 L29 26 L0 26 Z" fill="#D9A40F"/><rect x="13" y="8" width="3.5" height="9" fill="#2B2B2B"/><rect x="13" y="19" width="3.5" height="3.5" fill="#2B2B2B"/></svg>
<div class="t" style="left:4343px;top:228.77px;font-size:26px;color:#A9A9A9;font-weight:normal;">3</div>
<svg style="left:4384px;top:233px;" width="22" height="13" viewBox="0 0 22 13"><path d="M1.5 11.5 L10.5 2 L19.5 11.5" fill="none" stroke="#A9A9A9" stroke-width="2.5"/></svg>
<svg style="left:4438px;top:234px;" width="22" height="13" viewBox="0 0 22 13"><path d="M1.5 1.5 L10.5 11 L19.5 1.5" fill="none" stroke="#A9A9A9" stroke-width="2.5"/></svg>
<div style="left:4450px;top:351px;width:23px;height:2020px;background:#545454;border-radius:11.5px;"></div>
<div style="left:4444px;top:505px;width:31px;height:6px;background:#B89A34;"></div>
<div style="left:4444px;top:505px;width:5px;height:6px;background:#E0A000;"></div>
<div style="left:4444px;top:2105px;width:31px;height:6px;background:#B89A34;"></div>
<div style="left:4444px;top:2105px;width:5px;height:6px;background:#E0A000;"></div>
<div style="left:4444px;top:2219px;width:31px;height:6px;background:#B89A34;"></div>
<div style="left:4444px;top:2219px;width:5px;height:6px;background:#E0A000;"></div>
<div style="left:153.5px;top:597.5px;width:341.7px;height:55.700000000000045px;background:transparent;border:6px solid #FC2A08;border-radius:7px;"></div>
<div style="left:1256px;top:325.0px;width:805px;height:184.2px;background:transparent;border:6px solid #FC2A08;border-radius:7px;"></div>
<div style="left:1350px;top:655.5px;width:614.5999999999999px;height:151.70000000000005px;background:transparent;border:6px solid #FC2A08;border-radius:7px;"></div>
<div style="left:1164px;top:1802.5px;width:782.4000000000001px;height:368.6999999999998px;background:transparent;border:6px solid #FC2A08;border-radius:7px;"></div>
<div style="left:1260px;top:2358.5px;width:1769px;height:96.69999999999982px;background:transparent;border:6px solid #FC2A08;border-radius:7px;"></div>
<div style="left:4474px;top:0px;width:1px;height:2545px;background:#262626;"></div>
</body></html>
